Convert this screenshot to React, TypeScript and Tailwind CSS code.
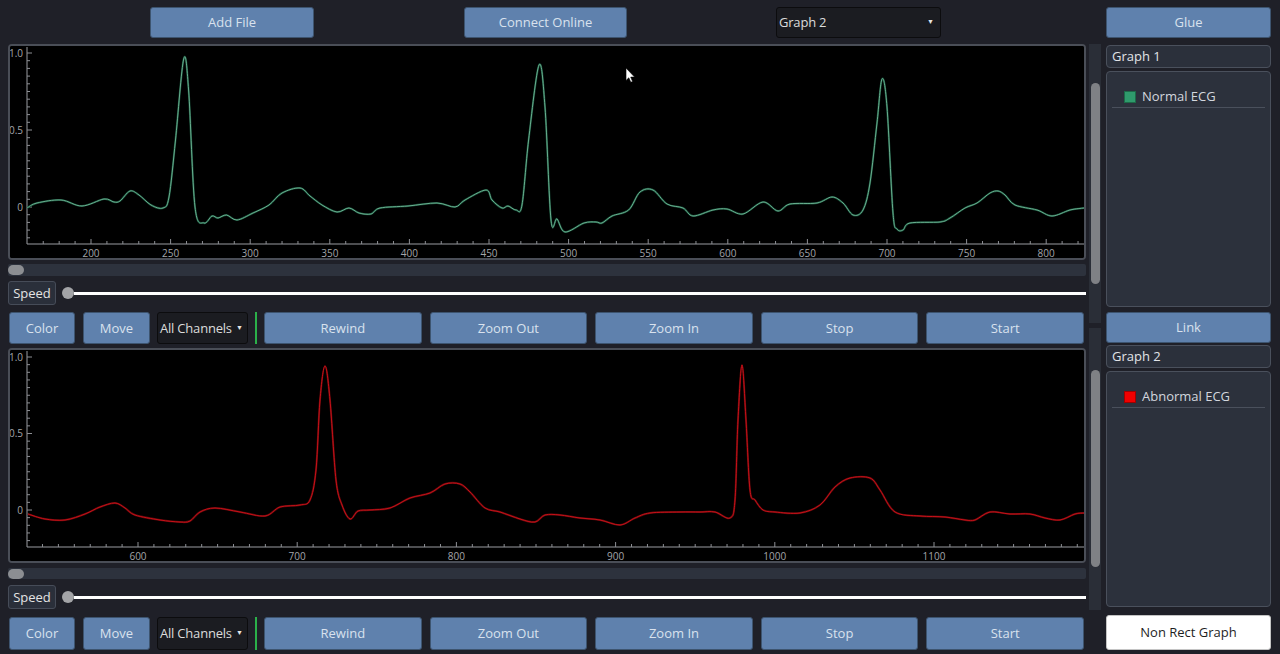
import React from "react";

type Pt = [number, number];

function smooth(pts: Pt[]): string {
  let d = `M${pts[0][0]},${pts[0][1]}`;
  for (let i = 0; i < pts.length - 1; i++) {
    const p0 = pts[i - 1] || pts[i];
    const p1 = pts[i];
    const p2 = pts[i + 1];
    const p3 = pts[i + 2] || p2;
    const c1x = p1[0] + (p2[0] - p0[0]) / 6;
    const c1y = p1[1] + (p2[1] - p0[1]) / 6;
    const c2x = p2[0] - (p3[0] - p1[0]) / 6;
    const c2y = p2[1] - (p3[1] - p1[1]) / 6;
    d += ` C${c1x.toFixed(1)},${c1y.toFixed(1)} ${c2x.toFixed(1)},${c2y.toFixed(1)} ${p2[0]},${p2[1]}`;
  }
  return d;
}

const greenPts: Pt[] = [
  [27, 208], [37, 203], [61, 200], [82, 206], [104, 199], [114, 202], [120, 201], [130, 191],
  [139, 195], [151, 205], [163, 208], [169, 197], [175.5, 140], [183.7, 59], [188.6, 90],
  [195, 207], [204, 223], [212, 216], [218, 218], [226.5, 215], [237, 220], [253, 213],
  [269, 205], [282, 193], [300, 188], [310, 196], [322, 205], [337, 212], [349, 208],
  [359, 213], [371, 214], [380, 208], [408, 206], [437, 203], [455, 207], [465, 200],
  [486, 190], [492, 200], [502, 208], [508, 206], [516, 210], [522, 205], [528.6, 140],
  [539, 65], [545, 107], [551, 220], [557, 219], [565, 232], [584, 223], [596, 222],
  [602, 223], [612, 216], [628.6, 210], [640, 192], [653, 190], [667, 204], [683, 208],
  [693, 216], [713, 210], [727, 209], [743, 214], [763, 202], [778, 211], [790, 204],
  [817, 203], [832, 197], [843, 203], [853, 215], [863, 210], [870, 183], [877, 123],
  [882, 79], [887, 107], [893, 213], [897, 229], [903, 230], [910, 223], [940, 222],
  [950, 218], [965, 208], [977, 203], [990, 193], [998, 191], [1005, 195], [1015, 205],
  [1037, 210], [1052, 216], [1070, 210], [1084, 208],
];

const redPts: Pt[] = [
  [28, 514], [45, 519], [65, 520], [85, 514], [100, 507], [115, 503], [125, 508], [135, 515],
  [160, 520], [180, 522], [190, 521], [200, 512], [215, 508], [240, 512], [265, 516],
  [280, 507], [300, 505], [310, 500], [316, 470], [320, 400], [325, 366], [330, 400],
  [336, 480], [342, 505], [350, 519], [358, 511], [370, 510], [390, 508], [410, 498],
  [430, 493], [445, 484], [460, 484], [470, 492], [485, 508], [500, 512], [520, 519],
  [535, 522], [545, 515], [560, 515], [580, 518], [600, 520], [620, 525], [635, 518],
  [650, 513], [680, 512], [700, 512], [715, 512], [730, 518], [735, 500], [738, 420],
  [742, 365], [746, 420], [750, 490], [755, 500], [763, 510], [775, 512], [800, 513],
  [820, 505], [835, 487], [850, 478], [870, 478], [880, 490], [895, 512], [920, 516],
  [945, 517], [965, 520], [975, 520], [990, 512], [1010, 514], [1030, 514], [1045, 518],
  [1060, 520], [1075, 514], [1084, 513],
];

type AxisCfg = {
  vx: number; vy: number; vw: number; vh: number;
  yAxisX: number; yTop: number; xAxisY: number; xRight: number;
  y0: number; yScale: number;
  xRef: number; vRef: number; vStart: number; vEnd: number; majorEvery: number;
};

function Plot({ cfg, pts, outer, inner, cursor }: { cfg: AxisCfg; pts: Pt[]; outer: string; inner: string; cursor?: boolean }) {
  const xs: React.ReactNode[] = [];
  for (let v = cfg.vStart; v <= cfg.vEnd; v += 10) {
    const x = cfg.xRef + (v - cfg.vRef) * 1.592;
    if (x < cfg.yAxisX + 1 || x > cfg.xRight) continue;
    const major = v % cfg.majorEvery === 0;
    xs.push(
      <line key={"t" + v} x1={x} x2={x} y1={cfg.xAxisY} y2={cfg.xAxisY - (major ? 5 : 3)} stroke="#8d8f94" strokeWidth={1} />
    );
    if (major)
      xs.push(
        <text key={"l" + v} x={x} y={cfg.xAxisY + 12.5} fontSize={10} fill="#a3a5aa" textAnchor="middle">
          {v}
        </text>
      );
  }
  const ys: React.ReactNode[] = [];
  for (let k = -4; k <= 20; k++) {
    const val = k * 0.05;
    const y = cfg.y0 - val * cfg.yScale;
    if (y > cfg.xAxisY - 2 || y < cfg.yTop) continue;
    const major = k % 10 === 0;
    ys.push(
      <line key={"y" + k} x1={cfg.yAxisX} x2={cfg.yAxisX + (major ? 5 : 3)} y1={y} y2={y} stroke="#8d8f94" strokeWidth={1} />
    );
    if (major)
      ys.push(
        <text key={"yl" + k} x={cfg.yAxisX - 4} y={y + 3.5} fontSize={10} fill="#a3a5aa" textAnchor="end">
          {k === 0 ? "0" : k === 10 ? "0.5" : "1.0"}
        </text>
      );
  }
  const d = smooth(pts);
  return (
    <svg width={cfg.vw} height={cfg.vh} viewBox={`${cfg.vx} ${cfg.vy} ${cfg.vw} ${cfg.vh}`} className="block" style={{ fontFamily: "'Open Sans', sans-serif" }}>
      <rect x={cfg.vx} y={cfg.vy} width={cfg.vw} height={cfg.vh} fill="#000" />
      <line x1={cfg.yAxisX} x2={cfg.yAxisX} y1={cfg.yTop} y2={cfg.xAxisY} stroke="#9a9ca1" strokeWidth={1} />
      <line x1={cfg.yAxisX} x2={cfg.xRight} y1={cfg.xAxisY} y2={cfg.xAxisY} stroke="#9a9ca1" strokeWidth={1} />
      {xs}
      {ys}
      <path d={d} fill="none" stroke={outer} strokeWidth={2} strokeLinejoin="round" />
      <path d={d} fill="none" stroke={inner} strokeWidth={0.9} strokeLinejoin="round" />
      {cursor && (
        <path d="M626,68 L626,80.5 L628.8,77.8 L630.8,82.3 L632.6,81.5 L630.7,77.1 L634.6,77.1 Z" fill="#fff" stroke="#000" strokeWidth={0.6} />
      )}
    </svg>
  );
}

const topCfg: AxisCfg = {
  vx: 10, vy: 46, vw: 1074, vh: 212,
  yAxisX: 27, yTop: 47, xAxisY: 244, xRight: 1084,
  y0: 207, yScale: 154,
  xRef: 91, vRef: 200, vStart: 160, vEnd: 830, majorEvery: 50,
};

const botCfg: AxisCfg = {
  vx: 10, vy: 350, vw: 1074, vh: 211,
  yAxisX: 27, yTop: 351, xAxisY: 547, xRight: 1084,
  y0: 510, yScale: 153,
  xRef: 138, vRef: 600, vStart: 530, vEnd: 1190, majorEvery: 100,
};

function Btn({ label, className }: { label: string; className: string }) {
  return (
    <div className={`flex items-center justify-center pt-[1px] rounded-[3px] bg-[#5f81ad] border border-[#3d546f] text-[#d9e2ee] text-[13px] whitespace-nowrap ${className}`}>
      {label}
    </div>
  );
}

function Combo({ label, className }: { label: string; className: string }) {
  return (
    <div className={`flex items-center justify-between pt-[1px] rounded-[3px] bg-[#1b1c21] border border-[#0c0c0e] text-[#dcdcdc] text-[13px] whitespace-nowrap ${className}`}>
      <span className="tracking-[-0.2px]">{label}</span>
      <span className="text-[7px] leading-none text-[#e6e6e6] -mt-[3px]">▼</span>
    </div>
  );
}

function HScroll({ h }: { h: string }) {
  return (
    <div className={`w-[1078px] bg-[#2d323d] rounded-[2px] flex items-center ${h}`}>
      <div className="h-[10px] w-[16px] rounded-full bg-[#8c8e92]" />
    </div>
  );
}

function SpeedRow() {
  return (
    <div className="h-[24px] flex items-center">
      <div className="h-[24px] w-[48px] pt-[1px] rounded-[3px] bg-[#2a2f3a] border border-[#464c58] text-[#e4e4e4] text-[13px] flex items-center justify-center">
        Speed
      </div>
      <div className="ml-[6px] w-[12px] h-[12px] rounded-full bg-[#a3a4a7]" />
      <div className="flex-1 h-[3px] bg-white" />
    </div>
  );
}

function ButtonRow({ h }: { h: string }) {
  return (
    <div className={`flex items-stretch ${h}`}>
      <Btn label="Color" className="ml-[1px] w-[66px]" />
      <Btn label="Move" className="ml-[8px] w-[67px]" />
      <Combo label="All Channels" className="ml-[7px] w-[91px] pl-[2px] pr-[4px]" />
      <div className="ml-[7px] w-[2px] bg-[#2bb04a]" />
      <div className="ml-[7px] flex-1 flex gap-[8px] mr-[2px]">
        <Btn label="Rewind" className="flex-1" />
        <Btn label="Zoom Out" className="flex-1" />
        <Btn label="Zoom In" className="flex-1" />
        <Btn label="Stop" className="flex-1" />
        <Btn label="Start" className="flex-1" />
      </div>
    </div>
  );
}

function LegendList({ name, swatch }: { name: string; swatch: string }) {
  return (
    <div className="h-[236px] rounded-[4px] bg-[#2c313c] border border-[#4a505c] px-[5px] pt-[17px]">
      <div className="flex items-center h-[15px] pl-[12px]">
        <div className={`w-[12px] h-[12px] ${swatch}`} />
        <span className="ml-[6px] text-[13px] text-[#d3d7de]">{name}</span>
      </div>
      <div className="mt-[3px] h-px bg-[#4a505c]" />
    </div>
  );
}

function GraphHeader({ label }: { label: string }) {
  return (
    <div className="h-[23px] pt-[1px] rounded-[4px] bg-[#2b303b] border border-[#4a505c] text-[13px] text-[#e2e4e8] flex items-center pl-[5px]">
      {label}
    </div>
  );
}

function VTrack({ h, top, thumb }: { h: string; top: string; thumb: string }) {
  return (
    <div className={`w-[12px] bg-[#2a2e37] flex flex-col items-center ${h}`}>
      <div className={`w-[9px] rounded-full bg-[#7f8185] ${top} ${thumb}`} />
    </div>
  );
}

export default function App() {
  return (
    <div className="w-[1280px] h-[654px] bg-[#1f2028] flex overflow-hidden font-['Open_Sans','Noto_Sans',sans-serif]">
      <div className="ml-[8px] w-[1078px] flex flex-col">
        <div className="h-[44px] flex items-start pt-[7px]">
          <Btn label="Add File" className="ml-[142px] w-[164px] h-[31px]" />
          <Btn label="Connect Online" className="ml-[150px] w-[163px] h-[31px]" />
          <Combo label="Graph 2" className="ml-[149px] w-[165px] h-[31px] pl-[2px] pr-[6px]" />
        </div>
        <div className="h-[216px] rounded-[4px] border-2 border-[#4a4e57] bg-black overflow-hidden">
          <Plot cfg={topCfg} pts={greenPts} outer="#174a36" inner="#72ba99" cursor />
        </div>
        <div className="mt-[4px]">
          <HScroll h="h-[12px]" />
        </div>
        <div className="mt-[5px]">
          <SpeedRow />
        </div>
        <div className="mt-[7px]">
          <ButtonRow h="h-[32px]" />
        </div>
        <div className="mt-[4px] h-[215px] rounded-[4px] border-2 border-[#4a4e57] bg-black overflow-hidden">
          <Plot cfg={botCfg} pts={redPts} outer="#5a080b" inner="#d3121a" />
        </div>
        <div className="mt-[5px]">
          <HScroll h="h-[11px]" />
        </div>
        <div className="mt-[6px]">
          <SpeedRow />
        </div>
        <div className="mt-[8px]">
          <ButtonRow h="h-[33px]" />
        </div>
      </div>

      <div className="ml-[3px] flex flex-col pt-[44px]">
        <VTrack h="h-[279px]" top="mt-[39px]" thumb="h-[201px]" />
        <div className="mt-[5px]">
          <VTrack h="h-[282px]" top="mt-[42px]" thumb="h-[197px]" />
        </div>
      </div>

      <div className="ml-[5px] w-[165px] flex flex-col pt-[7px]">
        <Btn label="Glue" className="h-[31px]" />
        <div className="mt-[7px]">
          <GraphHeader label="Graph 1" />
        </div>
        <div className="mt-[3px]">
          <LegendList name="Normal ECG" swatch="bg-[#2f9a6c] border border-[#1d6a48]" />
        </div>
        <Btn label="Link" className="mt-[5px] h-[31px]" />
        <div className="mt-[2px]">
          <GraphHeader label="Graph 2" />
        </div>
        <div className="mt-[3px]">
          <LegendList name="Abnormal ECG" swatch="bg-[#f00000] border border-[#a00000]" />
        </div>
        <div className="mt-[8px] h-[35px] pt-[1px] rounded-[3px] bg-white border border-[#c4c4c4] text-[13px] text-[#1e1e1e] flex items-center justify-center">
          Non Rect Graph
        </div>
      </div>
    </div>
  );
}
